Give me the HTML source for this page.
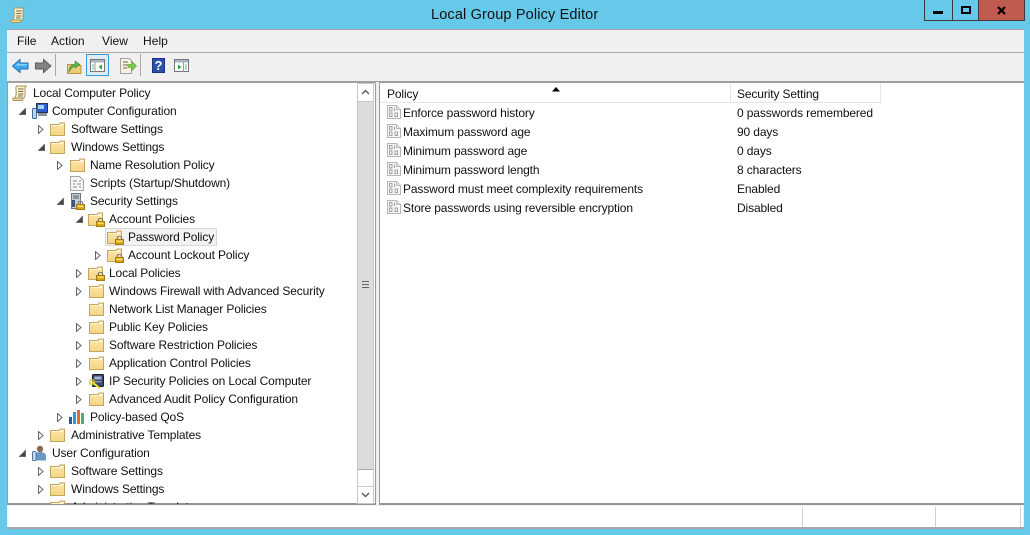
<!DOCTYPE html>
<html><head><meta charset="utf-8"><style>
html,body{margin:0;padding:0;width:1030px;height:535px;overflow:hidden;background:#66c9ea;font-family:"Liberation Sans",sans-serif;font-size:12px;color:#000}
div,span{position:absolute;box-sizing:border-box}
svg{position:absolute;overflow:visible}
.t{white-space:nowrap;line-height:18px;height:18px;color:#111;font-size:12px;letter-spacing:-.13px}
.m{top:32px;line-height:18px;font-size:12px;color:#111;letter-spacing:.05px}
</style></head><body>
<svg width="0" height="0" style="position:absolute"><defs>
<linearGradient id="fg" x1="0" y1="0" x2="0" y2="1"><stop offset="0" stop-color="#fae6ac"/><stop offset="1" stop-color="#f5d584"/></linearGradient>
<linearGradient id="lg" x1="0" y1="0" x2="0" y2="1"><stop offset="0" stop-color="#f2c83c"/><stop offset="1" stop-color="#cf9612"/></linearGradient>
<symbol id="fo" viewBox="0 0 15 14"><path d="M.5 2.500H9L10 1h4.500v12.500H.5z" fill="url(#fg)" stroke="#c4a55a"/><path d="M10.300 2h3.200v1.500H9.500z" fill="#fff8e0"/><path d="M1.500 3.500h12" stroke="#fff3d0"/></symbol>
<symbol id="lk" viewBox="0 0 9 9"><path d="M2.300 4V2.300a2.200 2.200 0 0 1 4.400 0V4" fill="none" stroke="#777" stroke-width="1.200"/><rect x=".5" y="3.500" width="8" height="5" fill="url(#lg)" stroke="#a87c10"/><path d="M2 5.500h5" stroke="#f8e08a"/></symbol>
<symbol id="op" viewBox="0 0 6 9"><path d="M.5.500v8l4.500-4z" fill="#fff" stroke="#666"/></symbol>
<symbol id="cl" viewBox="0 0 7 7"><path d="M6.500.5v6h-6z" fill="#444" stroke="#666"/></symbol>
<symbol id="sc" viewBox="0 0 15 16"><path d="M4.500 1H14c-1 1-1.300 2.300-1 4 .5 3 0 6-1 8H3c1-2 1.500-5 1-8-.3-1.700-.3-3 .5-4z" fill="#f7efcd" stroke="#a8975f"/><path d="M1 13h10c0 1.500-.5 2.500-1.500 2.500H2C1 15.500.5 14.500 1 13z" fill="#ead9a3" stroke="#a8975f"/><path d="M6 4h5.500M6.300 6.500h5M6.300 9h5M6 11h4.500" stroke="#7a6d4a"/></symbol>
<symbol id="pd" viewBox="0 0 14 14"><path d="M.5.500h9l4 4v9H.5z" fill="#f8f8f8" stroke="#b5b5b5"/><path d="M9.500.5v4h4" fill="#e6e6e6" stroke="#b5b5b5"/><g fill="none" stroke="#a0a0a0"><rect x="2.500" y="2.500" width="2.500" height="3.500"/><rect x="2.500" y="8" width="2.500" height="3.500"/><rect x="8" y="8" width="2.500" height="3.500"/><path d="M7.500 2.500V6"/></g></symbol>
</defs></svg>

<!-- title bar -->
<svg style="left:10px;top:7px" width="15" height="16"><use href="#sc" width="15" height="16"/></svg>
<div style="left:431px;top:6px;font-size:14.500px;line-height:18px;color:#111;white-space:nowrap;letter-spacing:.15px">Local Group Policy Editor</div>
<div style="left:924px;top:0;width:101px;height:21px;border:1px solid #3b3b3b;border-top:0;background:#66c9ea"></div>
<div style="left:952px;top:0;width:1px;height:20px;background:#3b3b3b"></div>
<div style="left:978px;top:0;width:46px;height:20px;background:#c25b4f;border-left:1px solid #3b3b3b"></div>
<div style="left:933px;top:11px;width:10px;height:3px;background:#000"></div>
<div style="left:961px;top:6px;width:10px;height:8px;border:2px solid #000"></div>
<svg style="left:997px;top:6px" width="9" height="9"><path d="M1 1l7 7M8 1L1 8" stroke="#000" stroke-width="2.200"/></svg>

<!-- window -->
<div style="left:7px;top:29px;width:1017px;height:499px;background:#f0f0f0;border-top:1px solid #a5a5a5"></div>
<div style="left:7px;top:52px;width:1017px;height:1px;background:#a9a9a9"></div>
<div style="left:7px;top:81px;width:1017px;height:1px;background:#a0a0a0"></div>
<div class="m" style="left:17px">File</div>
<div class="m" style="left:51px">Action</div>
<div class="m" style="left:102px">View</div>
<div class="m" style="left:143px">Help</div>

<!-- toolbar -->
<svg style="left:12px;top:59px" width="17" height="15"><path d="M.5 7L8 .5V4h8v6H8v3.500z" fill="#3fa9ee" stroke="#1f74ba"/><path d="M3 7l4-3.300V5h8v1.500H7" fill="#8fd2f7"/></svg>
<svg style="left:35px;top:59px" width="17" height="15"><path d="M16 7L8.500.5V4H.5v6h8v3.500z" fill="#838383" stroke="#5d5d5d"/></svg>
<div style="left:55px;top:54px;width:1px;height:22px;background:#a8a8a8"></div>
<svg style="left:67px;top:59px" width="15" height="15"><path d="M.5 5.500h5l1 1h7.500v8H.5z" fill="#eecb74" stroke="#b8974a"/><path d="M2 13c0-5 2.500-7.500 6-8V2l5 3.500L8 9V7C6 7.500 4 9.500 2 13z" fill="#56b848" stroke="#3d8a33" stroke-width=".6"/></svg>
<div style="left:86px;top:54px;width:23px;height:22px;background:#dcecf9;border:1px solid #3e98d6"></div>
<svg style="left:90px;top:59px" width="15" height="13"><rect x=".5" y=".5" width="14" height="12" fill="#fff" stroke="#777"/><rect x="1" y="1" width="13" height="2.500" fill="#a9b5c0"/><path d="M5 3.500v9" stroke="#999"/><path d="M12 5.500L8.500 8l3.500 2.500z" fill="#2aa43a"/><path d="M2 6h2M2 8h2M2 10h2" stroke="#7aa"/></svg>
<svg style="left:120px;top:58px" width="17" height="16"><path d="M.5.500h9l2 2v13H.5z" fill="#f7f3df" stroke="#a2a2a2"/><path d="M3 4h5M3 7h5M3 10h4" stroke="#666"/><path d="M8 6.500h4v-3l4.500 4.500-4.500 4.500v-3H8z" fill="#7ccb45" stroke="#5ca030" stroke-width=".6"/></svg>
<div style="left:140px;top:54px;width:1px;height:22px;background:#a8a8a8"></div>
<div style="left:152px;top:58px;width:13px;height:15px;background:#2c4fa8;border:1px solid #1c3380;color:#fff;font:bold 13px/13px 'Liberation Sans',sans-serif;text-align:center">?</div>
<svg style="left:174px;top:59px" width="15" height="13"><rect x=".5" y=".5" width="14" height="12" fill="#fff" stroke="#777"/><rect x="1" y="1" width="13" height="2.500" fill="#a9b5c0"/><path d="M9.500 3.500v9" stroke="#999"/><path d="M4 5.500L7.500 8 4 10.500z" fill="#2aa43a"/><path d="M11 6h2M11 8h2M11 10h2" stroke="#7aa"/></svg>

<!-- left pane -->
<div style="left:7px;top:82px;width:369px;height:423px;background:#fff;border:1px solid #9a9aa0;border-top-color:#a0a0a5;border-right:0;border-bottom:2px solid #94949a;overflow:hidden"></div>
<div style="left:376px;top:82px;width:3px;height:423px;background:#f0f0f0"></div>
<div style="left:375px;top:82px;width:1px;height:423px;background:#9a9aa0"></div>
<!-- scrollbar -->
<div style="left:357px;top:83px;width:17px;height:421px;background:#fff;border:1px solid #c8c8c8"></div>
<div style="left:358px;top:101px;width:15px;height:369px;background:#dcdcdc;border-top:1px solid #c8c8c8;border-bottom:1px solid #a8a8a8"></div>
<div style="left:358px;top:486px;width:15px;height:1px;background:#c8c8c8"></div>
<svg style="left:361px;top:89px" width="9" height="6"><path d="M1 5l3.500-3.500L8 5" fill="none" stroke="#606060" stroke-width="1.500"/></svg>
<svg style="left:361px;top:492px" width="9" height="6"><path d="M1 1l3.500 3.500L8 1" fill="none" stroke="#606060" stroke-width="1.500"/></svg>
<div style="left:362px;top:281px;width:7px;height:1px;background:#666"></div>
<div style="left:362px;top:284px;width:7px;height:1px;background:#666"></div>
<div style="left:362px;top:287px;width:7px;height:1px;background:#666"></div>

<!-- tree -->
<div style="left:105px;top:228px;width:112px;height:18px;background:#f2f2f2;border:1px solid #d9d9d9"></div>
<svg style="left:12px;top:85px" width="16" height="17"><use href="#sc" width="15" height="16"/></svg>
<div class="t" style="left:33px;top:84px">Local Computer Policy</div>

<svg style="left:19px;top:108px" width="7" height="7"><use href="#cl" width="7" height="7"/></svg>
<svg style="left:32px;top:103px" width="17" height="16"><rect x="4.500" y=".5" width="11" height="9" fill="#2f5fc8" stroke="#2a3350"/><rect x="6" y="2" width="6" height="4" fill="#9fd0f5"/><rect x="6" y="10" width="9" height="3" fill="#8a93a3"/><rect x=".5" y="5.500" width="4" height="10" rx="1" fill="#c8d0dc" stroke="#3f6aa0"/></svg>
<div class="t" style="left:52px;top:102px">Computer Configuration</div>

<svg style="left:38px;top:125px" width="6" height="9"><use href="#op" width="6" height="9"/></svg>
<svg style="left:50px;top:122px" width="15" height="14"><use href="#fo" width="15" height="14"/></svg>
<div class="t" style="left:71px;top:120px">Software Settings</div>

<svg style="left:38px;top:144px" width="7" height="7"><use href="#cl" width="7" height="7"/></svg>
<svg style="left:50px;top:140px" width="15" height="14"><use href="#fo" width="15" height="14"/></svg>
<div class="t" style="left:71px;top:138px">Windows Settings</div>

<svg style="left:57px;top:161px" width="6" height="9"><use href="#op" width="6" height="9"/></svg>
<svg style="left:70px;top:158px" width="15" height="14"><use href="#fo" width="15" height="14"/></svg>
<div class="t" style="left:90px;top:156px">Name Resolution Policy</div>

<svg style="left:70px;top:176px" width="14" height="15"><path d="M.5.500h9l4 4v10H.5z" fill="#f5f5f5" stroke="#a5a5a5"/><path d="M3 5h4M9 5h2M3 8h2M7 8h4M3 11h4M9 11h2" stroke="#8a8a8a"/></svg>
<div class="t" style="left:90px;top:174px">Scripts (Startup/Shutdown)</div>

<svg style="left:57px;top:198px" width="7" height="7"><use href="#cl" width="7" height="7"/></svg>
<svg style="left:71px;top:193px" width="14" height="17"><rect x=".5" y=".5" width="9" height="15" fill="#c8ced6" stroke="#737880"/><path d="M2 3h6M2 5h6" stroke="#556"/><rect x="1" y="7" width="3" height="7" fill="#39557c"/><use href="#lk" x="5" y="8" width="9" height="9"/></svg>
<div class="t" style="left:90px;top:192px">Security Settings</div>

<svg style="left:76px;top:216px" width="7" height="7"><use href="#cl" width="7" height="7"/></svg>
<svg style="left:88px;top:212px" width="18" height="16"><use href="#fo" width="15" height="14"/><use href="#lk" x="8" y="6" width="9" height="9"/></svg>
<div class="t" style="left:109px;top:210px">Account Policies</div>

<svg style="left:107px;top:230px" width="18" height="16"><use href="#fo" width="15" height="14"/><use href="#lk" x="8" y="6" width="9" height="9"/></svg>
<div class="t" style="left:128px;top:228px">Password Policy</div>

<svg style="left:95px;top:251px" width="6" height="9"><use href="#op" width="6" height="9"/></svg>
<svg style="left:107px;top:248px" width="18" height="16"><use href="#fo" width="15" height="14"/><use href="#lk" x="8" y="6" width="9" height="9"/></svg>
<div class="t" style="left:128px;top:246px">Account Lockout Policy</div>

<svg style="left:76px;top:269px" width="6" height="9"><use href="#op" width="6" height="9"/></svg>
<svg style="left:88px;top:266px" width="18" height="16"><use href="#fo" width="15" height="14"/><use href="#lk" x="8" y="6" width="9" height="9"/></svg>
<div class="t" style="left:109px;top:264px">Local Policies</div>

<svg style="left:76px;top:287px" width="6" height="9"><use href="#op" width="6" height="9"/></svg>
<svg style="left:89px;top:284px" width="15" height="14"><use href="#fo" width="15" height="14"/></svg>
<div class="t" style="left:109px;top:282px">Windows Firewall with Advanced Security</div>

<svg style="left:89px;top:302px" width="15" height="14"><use href="#fo" width="15" height="14"/></svg>
<div class="t" style="left:109px;top:300px">Network List Manager Policies</div>

<svg style="left:76px;top:323px" width="6" height="9"><use href="#op" width="6" height="9"/></svg>
<svg style="left:89px;top:320px" width="15" height="14"><use href="#fo" width="15" height="14"/></svg>
<div class="t" style="left:109px;top:318px">Public Key Policies</div>

<svg style="left:76px;top:341px" width="6" height="9"><use href="#op" width="6" height="9"/></svg>
<svg style="left:89px;top:338px" width="15" height="14"><use href="#fo" width="15" height="14"/></svg>
<div class="t" style="left:109px;top:336px">Software Restriction Policies</div>

<svg style="left:76px;top:359px" width="6" height="9"><use href="#op" width="6" height="9"/></svg>
<svg style="left:89px;top:356px" width="15" height="14"><use href="#fo" width="15" height="14"/></svg>
<div class="t" style="left:109px;top:354px">Application Control Policies</div>

<svg style="left:76px;top:377px" width="6" height="9"><use href="#op" width="6" height="9"/></svg>
<svg style="left:89px;top:374px" width="16" height="16"><rect x="3.500" y=".5" width="11" height="12" rx="1" fill="#3c4a6e" stroke="#1c1c2c"/><rect x="5.500" y="2.500" width="7" height="3" fill="#9fb6dd"/><rect x="5.500" y="7" width="7" height="1.500" fill="#8a93a3"/><path d="M3 8l8 6.500" stroke="#f3e23a" stroke-width="2"/><circle cx="2.800" cy="8" r="2.300" fill="none" stroke="#d8c81f" stroke-width="1.400"/></svg>
<div class="t" style="left:109px;top:372px">IP Security Policies on Local Computer</div>

<svg style="left:76px;top:395px" width="6" height="9"><use href="#op" width="6" height="9"/></svg>
<svg style="left:89px;top:392px" width="15" height="14"><use href="#fo" width="15" height="14"/></svg>
<div class="t" style="left:109px;top:390px">Advanced Audit Policy Configuration</div>

<svg style="left:57px;top:413px" width="6" height="9"><use href="#op" width="6" height="9"/></svg>
<svg style="left:69px;top:410px" width="17" height="15"><rect x="0" y="7" width="3" height="7" fill="#1b5fa5"/><rect x="4" y="2" width="3" height="12" fill="#2a9ad8"/><rect x="8" y="0" width="3" height="14" fill="#e0693f"/><rect x="12" y="3" width="3" height="11" fill="#4fae6a"/></svg>
<div class="t" style="left:90px;top:408px">Policy-based QoS</div>

<svg style="left:38px;top:431px" width="6" height="9"><use href="#op" width="6" height="9"/></svg>
<svg style="left:50px;top:428px" width="15" height="14"><use href="#fo" width="15" height="14"/></svg>
<div class="t" style="left:71px;top:426px">Administrative Templates</div>

<svg style="left:19px;top:450px" width="7" height="7"><use href="#cl" width="7" height="7"/></svg>
<svg style="left:32px;top:445px" width="15" height="16"><circle cx="8" cy="4" r="3.200" fill="#8a6a50"/><path d="M4 15.500V9.500c0-2 2-2.500 4-2.500s6 .5 6 4v4.500z" fill="#6d97c6"/><rect x=".5" y="6.500" width="3.500" height="9" rx="1" fill="#d0dcea" stroke="#4d78a8"/></svg>
<div class="t" style="left:52px;top:444px">User Configuration</div>

<svg style="left:38px;top:467px" width="6" height="9"><use href="#op" width="6" height="9"/></svg>
<svg style="left:50px;top:464px" width="15" height="14"><use href="#fo" width="15" height="14"/></svg>
<div class="t" style="left:71px;top:462px">Software Settings</div>

<svg style="left:38px;top:485px" width="6" height="9"><use href="#op" width="6" height="9"/></svg>
<svg style="left:50px;top:482px" width="15" height="14"><use href="#fo" width="15" height="14"/></svg>
<div class="t" style="left:71px;top:480px">Windows Settings</div>

<div style="left:8px;top:500px;width:349px;height:4px;overflow:hidden">
<svg style="left:42px;top:0" width="15" height="14"><use href="#fo" width="15" height="14"/></svg>
<div class="t" style="left:63px;top:-2px">Administrative Templates</div></div>

<!-- right pane -->
<div style="left:379px;top:82px;width:645px;height:423px;background:#fff;border:1px solid #9a9aa0;border-right:0;border-bottom:2px solid #94949a"></div>
<div style="left:380px;top:102px;width:501px;height:1px;background:#e5e5e5"></div>
<div style="left:730px;top:84px;width:1px;height:18px;background:#e5e5e5"></div>
<div style="left:880px;top:84px;width:1px;height:18px;background:#e5e5e5"></div>
<div class="t" style="left:387px;top:85px">Policy</div>
<div class="t" style="left:737px;top:85px">Security Setting</div>
<svg style="left:552px;top:87px" width="8" height="5"><path d="M0 4.500L4 0l4 4.500z" fill="#000"/></svg>

<svg style="left:387px;top:105px" width="14" height="14"><use href="#pd" width="14" height="14"/></svg>
<div class="t" style="left:403px;top:104px">Enforce password history</div>
<div class="t" style="left:737px;top:104px">0 passwords remembered</div>
<svg style="left:387px;top:124px" width="14" height="14"><use href="#pd" width="14" height="14"/></svg>
<div class="t" style="left:403px;top:123px">Maximum password age</div>
<div class="t" style="left:737px;top:123px">90 days</div>
<svg style="left:387px;top:143px" width="14" height="14"><use href="#pd" width="14" height="14"/></svg>
<div class="t" style="left:403px;top:142px">Minimum password age</div>
<div class="t" style="left:737px;top:142px">0 days</div>
<svg style="left:387px;top:162px" width="14" height="14"><use href="#pd" width="14" height="14"/></svg>
<div class="t" style="left:403px;top:161px">Minimum password length</div>
<div class="t" style="left:737px;top:161px">8 characters</div>
<svg style="left:387px;top:181px" width="14" height="14"><use href="#pd" width="14" height="14"/></svg>
<div class="t" style="left:403px;top:180px">Password must meet complexity requirements</div>
<div class="t" style="left:737px;top:180px">Enabled</div>
<svg style="left:387px;top:200px" width="14" height="14"><use href="#pd" width="14" height="14"/></svg>
<div class="t" style="left:403px;top:199px">Store passwords using reversible encryption</div>
<div class="t" style="left:737px;top:199px">Disabled</div>

<!-- status bar -->
<div style="left:8px;top:506px;width:1015px;height:21px;background:#fff"></div>
<div style="left:802px;top:507px;width:1px;height:20px;background:#d0d0d0"></div>
<div style="left:935px;top:507px;width:1px;height:20px;background:#d0d0d0"></div>
<div style="left:1020px;top:507px;width:1px;height:20px;background:#d0d0d0"></div>
<div style="left:7px;top:527px;width:1017px;height:2px;background:#a8a8a8"></div>
</body></html>
